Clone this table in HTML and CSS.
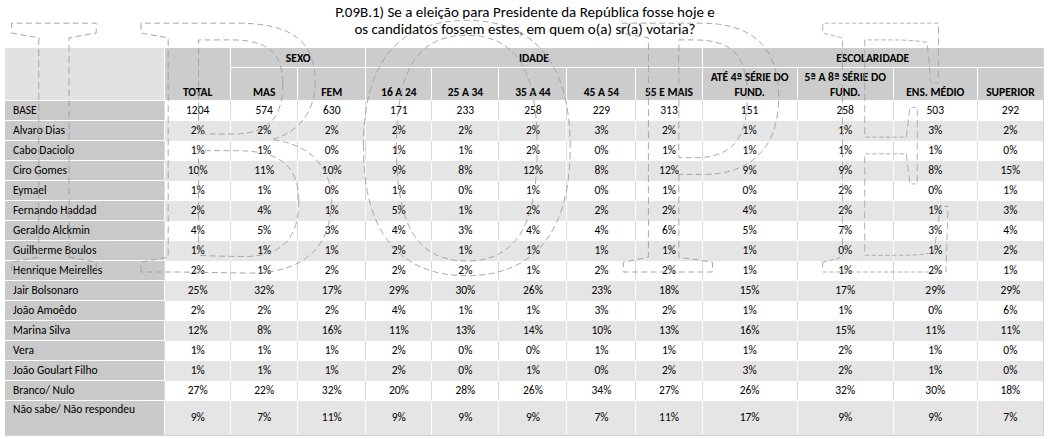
FILE: index.html
```html
<!DOCTYPE html>
<html lang="pt">
<head>
<meta charset="utf-8">
<title>P.09B.1</title>
<link rel="stylesheet" href="styles.css">
</head>
<body>
<div class="title">P.09B.1) Se a eleição para Presidente da República fosse hoje e<br>os candidatos fossem estes, em quem o(a) sr(a) votaria?</div>
<div class="wrap">
<table class="grid">
<colgroup>
<col class="c-lbl"><col class="c-66"><col class="c-67"><col class="c-68"><col class="c-66"><col class="c-67"><col class="c-68"><col class="c-69"><col class="c-66"><col class="c-95"><col class="c-96"><col class="c-84"><col class="c-66">
</colgroup>
<thead>
<tr class="h1">
<th class="corner" rowspan="2"></th>
<th class="tot" rowspan="2">TOTAL</th>
<th colspan="2">SEXO</th>
<th colspan="5">IDADE</th>
<th colspan="4">ESCOLARIDADE</th>
</tr>
<tr class="h2">
<th>MAS</th><th>FEM</th><th>16 A 24</th><th>25 A 34</th><th>35 A 44</th><th>45 A 54</th><th>55 E MAIS</th><th>ATÉ 4<span class="ord">ª</span> SÉRIE DO<br>FUND.</th><th>5<span class="ord">ª</span> A 8<span class="ord">ª</span> SÉRIE DO<br>FUND.</th><th>ENS. MÉDIO</th><th>SUPERIOR</th>
</tr>
</thead>
<tbody>
<tr><td class="lbl">BASE</td><td>1204</td><td>574</td><td>630</td><td>171</td><td>233</td><td>258</td><td>229</td><td>313</td><td>151</td><td>258</td><td>503</td><td>292</td></tr>
<tr class="alt"><td class="lbl">Alvaro Dias</td><td>2%</td><td>2%</td><td>2%</td><td>2%</td><td>2%</td><td>2%</td><td>3%</td><td>2%</td><td>1%</td><td>1%</td><td>3%</td><td>2%</td></tr>
<tr><td class="lbl">Cabo Daciolo</td><td>1%</td><td>1%</td><td>0%</td><td>1%</td><td>1%</td><td>2%</td><td>0%</td><td>1%</td><td>1%</td><td>1%</td><td>1%</td><td>0%</td></tr>
<tr class="alt"><td class="lbl">Ciro Gomes</td><td>10%</td><td>11%</td><td>10%</td><td>9%</td><td>8%</td><td>12%</td><td>8%</td><td>12%</td><td>9%</td><td>9%</td><td>8%</td><td>15%</td></tr>
<tr><td class="lbl">Eymael</td><td>1%</td><td>1%</td><td>0%</td><td>1%</td><td>0%</td><td>1%</td><td>0%</td><td>1%</td><td>0%</td><td>2%</td><td>0%</td><td>1%</td></tr>
<tr class="alt"><td class="lbl">Fernando Haddad</td><td>2%</td><td>4%</td><td>1%</td><td>5%</td><td>1%</td><td>2%</td><td>2%</td><td>2%</td><td>4%</td><td>2%</td><td>1%</td><td>3%</td></tr>
<tr><td class="lbl">Geraldo Alckmin</td><td>4%</td><td>5%</td><td>3%</td><td>4%</td><td>3%</td><td>4%</td><td>4%</td><td>6%</td><td>5%</td><td>7%</td><td>3%</td><td>4%</td></tr>
<tr class="alt"><td class="lbl">Guilherme Boulos</td><td>1%</td><td>1%</td><td>1%</td><td>2%</td><td>1%</td><td>1%</td><td>1%</td><td>1%</td><td>1%</td><td>0%</td><td>1%</td><td>2%</td></tr>
<tr><td class="lbl">Henrique Meirelles</td><td>2%</td><td>1%</td><td>2%</td><td>2%</td><td>2%</td><td>1%</td><td>2%</td><td>2%</td><td>1%</td><td>1%</td><td>2%</td><td>1%</td></tr>
<tr class="alt"><td class="lbl">Jair Bolsonaro</td><td>25%</td><td>32%</td><td>17%</td><td>29%</td><td>30%</td><td>26%</td><td>23%</td><td>18%</td><td>15%</td><td>17%</td><td>29%</td><td>29%</td></tr>
<tr><td class="lbl">João Amoêdo</td><td>2%</td><td>2%</td><td>2%</td><td>4%</td><td>1%</td><td>1%</td><td>3%</td><td>2%</td><td>1%</td><td>1%</td><td>0%</td><td>6%</td></tr>
<tr class="alt"><td class="lbl">Marina Silva</td><td>12%</td><td>8%</td><td>16%</td><td>11%</td><td>13%</td><td>14%</td><td>10%</td><td>13%</td><td>16%</td><td>15%</td><td>11%</td><td>11%</td></tr>
<tr><td class="lbl">Vera</td><td>1%</td><td>1%</td><td>1%</td><td>2%</td><td>0%</td><td>0%</td><td>1%</td><td>1%</td><td>1%</td><td>2%</td><td>1%</td><td>0%</td></tr>
<tr class="alt"><td class="lbl">João Goulart Filho</td><td>1%</td><td>1%</td><td>1%</td><td>2%</td><td>0%</td><td>1%</td><td>0%</td><td>2%</td><td>3%</td><td>2%</td><td>1%</td><td>0%</td></tr>
<tr><td class="lbl">Branco/ Nulo</td><td>27%</td><td>22%</td><td>32%</td><td>20%</td><td>28%</td><td>26%</td><td>34%</td><td>27%</td><td>26%</td><td>32%</td><td>30%</td><td>18%</td></tr>
<tr class="alt tall"><td class="lbl">Não sabe/ Não respondeu</td><td>9%</td><td>7%</td><td>11%</td><td>9%</td><td>9%</td><td>9%</td><td>7%</td><td>11%</td><td>17%</td><td>9%</td><td>9%</td><td>7%</td></tr>
</tbody>
</table>
</div>
<svg class="watermark" width="1050" height="439" viewBox="0 0 1050 439" aria-hidden="true">
<g transform="scale(0.85 1)">
<text x="0 155 412 720" y="272" class="wm-text">IBOP</text>
</g>
<g transform="scale(0.62 1)">
<text x="1316" y="272" class="wm-text">E</text>
</g>
</svg>
</body>
</html>
```
FILE: styles.css
```css
html, body {
  margin: 0;
  padding: 0;
}
body {
  position: relative;
  width: 1050px;
  height: 439px;
  overflow: hidden;
  background: #ffffff;
  color: #000000;
  font-family: Calibri, Carlito, Lato, "Liberation Sans", sans-serif;
}
.title {
  text-align: center;
  font-size: 15px;
  line-height: 17px;
  padding-top: 4px;
  margin-bottom: 10px;
}
.wrap {
  padding-left: 5px;
}
.grid {
  border-collapse: separate;
  border-spacing: 0;
  table-layout: fixed;
  width: 1039px;
  font-size: 11.5px;
  border-right: 1px solid #d2d2d2;
  border-bottom: 1px solid #d2d2d2;
}
.c-lbl { width: 159px; }
.c-66 { width: 66px; }
.c-67 { width: 67px; }
.c-68 { width: 68px; }
.c-69 { width: 69px; }
.c-84 { width: 84px; }
.c-95 { width: 95px; }
.c-96 { width: 96px; }

.grid th {
  background: #cccccc;
  font-weight: 700;
  text-align: center;
  border-left: 1px solid #ffffff;
  border-bottom: 1px solid #ffffff;
  padding: 0 2px;
  line-height: 14px;
}
.grid th .ord {
  font-family: "DejaVu Sans", sans-serif;
  font-size: 10px;
  font-weight: 700;
}
.grid th.corner {
  background: #e2e2e2;
  border-left: 0;
}
.h1 { height: 20px; }
.h2 { height: 33px; }
.h2 th, .grid th.tot {
  vertical-align: bottom;
  padding-bottom: 1px;
}
.grid td {
  height: 19px;
  padding: 0 2px;
  text-align: center;
  line-height: 15px;
  border-left: 1px solid #dadada;
  border-bottom: 1px solid transparent;
  background: #ffffff;
}
.grid tr.alt td {
  background: #e5e5e5;
  border-left-color: #ffffff;
}
.grid td.lbl,
.grid tr.alt td.lbl {
  background: #c9c9c9;
  text-align: left;
  padding-left: 8px;
  border-left: 0;
  border-bottom: 1px solid #ffffff;
  white-space: nowrap;
}
.grid tr.tall td {
  height: 32px;
}
.grid tr.tall td.lbl {
  vertical-align: top;
  padding-top: 1px;
  border-bottom-color: transparent;
}
.watermark {
  position: absolute;
  left: 0;
  top: 0;
  pointer-events: none;
}
.wm-text {
  font-family: "Liberation Serif", serif;
  font-weight: 400;
  font-size: 380px;
  fill: none;
  stroke: #a0a0a0;
  stroke-width: 1;
  stroke-dasharray: 7 4;
}
```
